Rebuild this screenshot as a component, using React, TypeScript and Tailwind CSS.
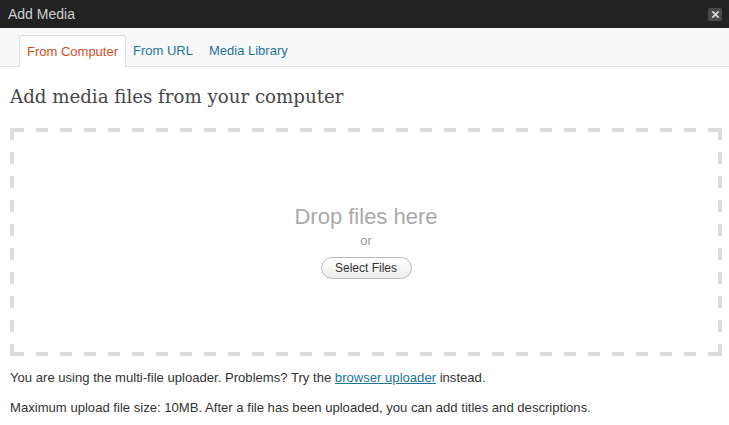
function DashedFrame() {
  // old webkit style 4px dashes: 12 on, 12 off, corners filled
  return (
    <svg className="absolute inset-0 w-full h-full" viewBox="0 0 712 228" preserveAspectRatio="none">
      <g stroke="#dcdcdc" strokeWidth={4} strokeDasharray="12 12" fill="none">
        <line x1={0} y1={2} x2={712} y2={2} strokeDashoffset={22} />
        <line x1={0} y1={226} x2={712} y2={226} strokeDashoffset={22} />
        <line x1={2} y1={0} x2={2} y2={228} />
        <line x1={710} y1={0} x2={710} y2={228} />
      </g>
    </svg>
  );
}

export default function App() {
  return (
    <div className="w-[729px] h-[425px] bg-white overflow-hidden font-['Liberation_Sans',Arial,sans-serif] text-[#333]">
      {/* title bar */}
      <div className="h-[28px] bg-[#222] flex items-center justify-between pl-[8px] pr-[7px]">
        <span className="text-[14px] text-[#cfcfcf]">Add Media</span>
        <button className="w-[14px] h-[13px] rounded-[2px] bg-[#4a4a4a] flex items-center justify-center">
          <svg viewBox="0 0 10 10" className="w-[9px] h-[9px]">
            <path d="M1.5 1.5l7 7M8.5 1.5l-7 7" stroke="#d8d8d8" strokeWidth={2} />
          </svg>
        </button>
      </div>

      {/* tabs */}
      <div className="h-[39px] bg-[#f9f9f9] border-b border-[#dfdfdf] flex items-end pl-[19px] text-[13px]">
        <div className="h-[32px] -mb-px px-[7px] flex items-center bg-white border border-b-0 border-[#dfdfdf] rounded-t-[3px] text-[#d54e21]">
          From Computer
        </div>
        <div className="h-[32px] -mb-px pl-[6px] pr-[7px] flex items-center border border-transparent text-[#21759b]">From URL</div>
        <div className="h-[32px] -mb-px px-[7px] flex items-center border border-transparent text-[#21759b]">Media Library</div>
      </div>

      <div className="px-[10px]">
        <h2 className="mt-[18px] text-[18.2px] leading-[24px] text-[#464646] font-['DejaVu_Serif',Georgia,serif]">
          Add media files from your computer
        </h2>

        <div className="relative mt-[19px] w-[712px] h-[228px] pt-[77px] flex flex-col items-center">
          <DashedFrame />
          <div className="text-[22px] leading-[24px] text-[#aaa]">Drop files here</div>
          <div className="text-[13px] leading-[16px] text-[#999] mt-[4px]">or</div>
          <button className="mt-[8px] w-[91px] h-[22px] rounded-full border border-[#bbb] bg-gradient-to-b from-white to-[#ededed] text-[12px] text-[#333]">
            Select Files
          </button>
        </div>

        <p className="mt-[14px] text-[13.1px] leading-[16px]">
          You are using the multi-file uploader. Problems? Try the{" "}
          <a href="#" className="text-[#21759b] underline">browser uploader</a> instead.
        </p>
        <p className="mt-[14px] text-[13.1px] leading-[16px]">
          Maximum upload file size: 10MB. After a file has been uploaded, you can add titles and descriptions.
        </p>
      </div>
    </div>
  );
}
